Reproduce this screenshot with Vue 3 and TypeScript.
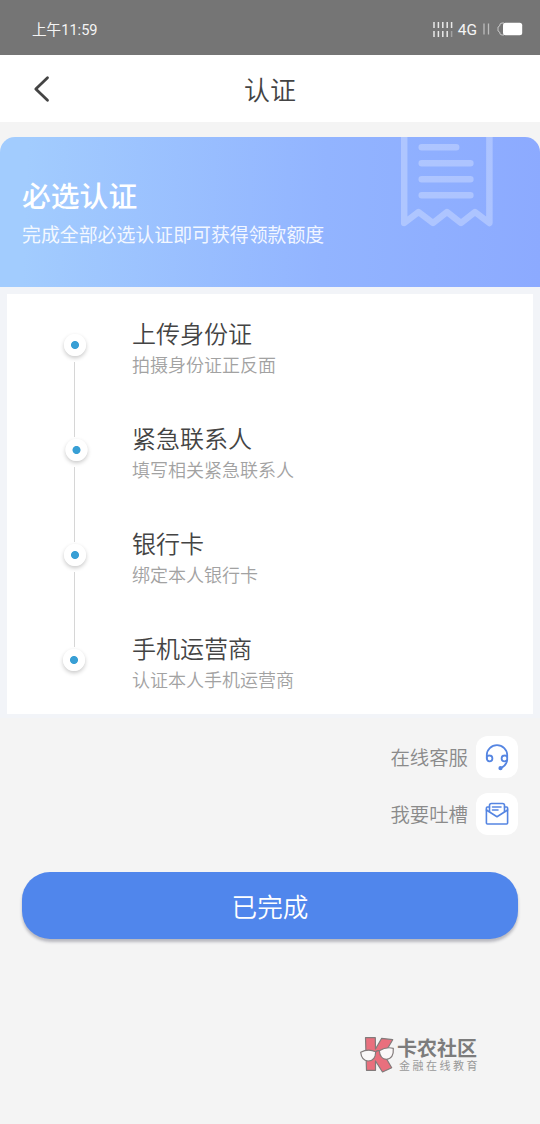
<script setup lang="ts">
interface Step {
  title: string
  hint: string
  shift: number
}

const steps: Step[] = [
  { title: '上传身份证', hint: '拍摄身份证正反面', shift: 0 },
  { title: '紧急联系人', hint: '填写相关紧急联系人', shift: 1.5 },
  { title: '银行卡', hint: '绑定本人银行卡', shift: 0 },
  { title: '手机运营商', hint: '认证本人手机运营商', shift: -1 },
]
</script>

<template>
  <div class="page">
    <div class="status">
      <span class="time">上午11:59</span>
      <div class="indicators">
        <svg class="signal" width="20" height="17" viewBox="0 0 20 17" stroke="#e8e8e8" stroke-width="1.5">
          <path d="M1 1v6M5.4 1v6M9.8 1v6M14.2 1v6M18.6 1v6M1 10v6M5.4 10v6M9.8 10v6M14.2 10v6" />
          <path d="M18.6 10v6" opacity=".4" />
        </svg>
        <span class="net">4G</span>
        <svg class="bars" width="7" height="12" viewBox="0 0 7 12" stroke="#bcbcbc" stroke-width="1.3">
          <path d="M1 .5v11M5.5 .5v11" />
        </svg>
        <svg class="battery" width="26" height="14" viewBox="0 0 26 14">
          <path d="M7 1H5Q2.6 1 2.6 4L1 5v4l1.6 1Q2.6 13 5 13h2" fill="none" stroke="#c8c8c8" />
          <rect x="6" y=".7" width="19.2" height="12.6" rx="2.5" fill="#fff" />
        </svg>
      </div>
    </div>

    <header class="nav">
      <svg class="back" width="18" height="28" viewBox="0 0 18 28">
        <path d="M15.5 2.7L3.8 14l11.700 11.300" fill="none" stroke="#444" stroke-width="2.8" stroke-linecap="round" stroke-linejoin="round" />
      </svg>
      <h1>认证</h1>
    </header>

    <section class="banner">
      <h2>必选认证</h2>
      <p>完成全部必选认证即可获得领款额度</p>
      <svg class="receipt" width="94" height="92" viewBox="0 0 94 92" fill="none" stroke="#fff" stroke-opacity=".28" stroke-width="6.5" stroke-linejoin="round">
        <path d="M4.2 -6V86L18.500 75l14.500 11 14-11 14 11 14-11 14.400 11V-6" />
        <path d="M21.700 10.3h34.5M21.700 26.3h48.700M21.700 42.3h48.700M21.700 58.3h48.700" stroke-linecap="round" />
      </svg>
    </section>

    <section class="card">
      <div v-for="step in steps" :key="step.title" class="step">
        <div class="rail">
          <span class="dot" :style="{ transform: `translateX(${step.shift}px)` }"></span>
          <span class="line"></span>
        </div>
        <div class="copy">
          <h3>{{ step.title }}</h3>
          <p>{{ step.hint }}</p>
        </div>
      </div>
    </section>

    <div class="links">
      <div class="link">
        <span>在线客服</span>
        <div class="tile">
          <svg width="24" height="28" viewBox="0 0 24 28" fill="none" stroke="#5585e2" stroke-width="1.8" stroke-linecap="round">
            <path d="M1.800 15.500V12a10.200 9.800 0 0 1 20.400 0V16.500q-.3 5.500-6.400 8.700" />
            <path d="M1.800 14Q2.500 12.300 4.500 12.500a2.900 2.900 0 0 1 0 5.800Q1.800 18.200 1.800 15M22.200 14Q21.500 12.300 19.500 12.500a2.900 2.900 0 0 0 0 5.800Q21.500 18.200 22.200 17" stroke-linejoin="round" />
            <circle cx="15.500" cy="25.200" r="1.200" fill="#5585e2" />
          </svg>
        </div>
      </div>
      <div class="link">
        <span>我要吐槽</span>
        <div class="tile">
          <svg width="24" height="24" viewBox="0 0 24 24" fill="none" stroke="#5585e2" stroke-width="1.6" stroke-linecap="round" stroke-linejoin="round">
            <path d="M4.500 5H2.400Q1.400 5 1.400 6V21q0 1 1 1H21.600q1 0 1-1V6q0-1-1-1H19.500" />
            <path d="M1.400 8L12 14.700l10.600-6.700" />
            <path d="M4.500 9.500V3.500q0-2 2-2h11q2 0 2 2v6M7.500 5h8.500M7.500 8h5.500" />
          </svg>
        </div>
      </div>
    </div>

    <button class="done">已完成</button>

    <footer class="brand">
      <svg width="35" height="37" viewBox="0 0 35 37" stroke="#827b7b" stroke-width="1.200" stroke-linejoin="round">
        <path d="M5.500 1.700H15.300L15.500 13 21.700 2.300l11 1.400L24 18.500l7.700 13.200-9.200 4.300L15.500 25v9.300H6.500Z" fill="#e96f7d" />
        <path d="M.7 16.300Q8 12.300 15.700 15.700 15.500 25 8 25 1.500 24.500 .7 16.300Z" fill="#faf8f8" />
        <path d="M19.300 14.700Q26 10.500 33.300 12.300 34 22.800 26.500 23.300 20 23 19.300 14.700Z" fill="#faf8f8" />
        <path d="M15.700 15.700q1.600-1.500 3.600-1" fill="none" />
      </svg>
      <div class="brand-copy">
        <strong>卡农社区</strong>
        <span>金融在线教育</span>
      </div>
    </footer>
  </div>
</template>

<style>
body {
  margin: 0;
  background: #f4f4f4;
}
</style>

<style scoped>
.page {
  width: 540px;
  height: 1124px;
  display: flex;
  flex-direction: column;
  overflow: hidden;
  background: #f4f4f4;
  font-family: 'Noto Sans CJK SC', sans-serif;
  font-weight: 350;
}
h1, h2, h3, p {
  margin: 0;
  font-weight: inherit;
}
.status {
  height: 55px;
  flex: none;
  box-sizing: border-box;
  padding: 3px 17px 0 32px;
  display: flex;
  align-items: center;
  justify-content: space-between;
  background: #757575;
  color: #f4f4f4;
}
.time {
  padding-top: 2px;
  font-family: Roboto, 'Noto Sans CJK SC', sans-serif;
  font-size: 14.600px;
  font-weight: 400;
  line-height: 20px;
}
.indicators {
  display: flex;
  align-items: center;
}
.net {
  margin-left: 5px;
  padding-top: 1px;
  font: 400 15.500px/20px Roboto, sans-serif;
}
.bars {
  margin-left: 6px;
}
.battery {
  margin-left: 7px;
}
.nav {
  height: 67px;
  flex: none;
  box-sizing: border-box;
  padding: 0 32px;
  display: grid;
  grid-template-columns: 18px 1fr 18px;
  align-items: center;
  background: #fff;
}
.nav h1 {
  color: #444;
  font-size: 26px;
  line-height: 36px;
  text-align: center;
}
.banner {
  position: relative;
  height: 150px;
  flex: none;
  box-sizing: border-box;
  margin-top: 15px;
  padding: 37px 22px 0;
  border-radius: 15px 15px 0 0;
  overflow: hidden;
  background: linear-gradient(92deg, #a2ccfe 5%, #92b4ff 60%, #8caaff);
  color: #fff;
}
.banner h2 {
  font-size: 28.800px;
  font-weight: 500;
  line-height: 42px;
}
.banner p {
  margin-top: 4px;
  font-size: 18.900px;
  font-weight: 400;
  line-height: 28px;
  opacity: .88;
}
.receipt {
  position: absolute;
  top: 0;
  left: 400px;
}
.card {
  height: 420px;
  flex: none;
  margin: 7px 7px 0;
  background: #fff;
  box-shadow: 0 0 0 7px #f2f4f8;
  clip-path: inset(-7px -7px -4px);
}
.step {
  height: 105px;
  display: flex;
}
.rail {
  width: 22px;
  margin-left: 56.500px;
  padding-top: 40px;
  box-sizing: border-box;
  display: flex;
  flex-direction: column;
  align-items: center;
}
.dot {
  flex: none;
  width: 22px;
  height: 22px;
  border-radius: 50%;
  background: radial-gradient(circle, #389fd5 3.600px, #fff 4.400px);
  box-shadow: 0 2px 4px rgba(0, 0, 0, .22);
}
.line {
  flex: none;
  width: 1px;
  height: 75px;
  margin-top: 6px;
  background: #d6d6d6;
}
.step:last-child .line {
  display: none;
}
.copy {
  margin-left: 46.500px;
  padding-top: 21px;
}
.copy h3 {
  color: #444;
  font-size: 24px;
  line-height: 36px;
}
.copy p {
  color: #a2a2a2;
  font-size: 18px;
  line-height: 26px;
}
.links {
  margin: 22px 22px 0 0;
  display: flex;
  flex-direction: column;
  gap: 15px;
}
.link {
  display: flex;
  justify-content: flex-end;
  align-items: center;
  gap: 8px;
  color: #8a8a8a;
  font-size: 19.400px;
  line-height: 28px;
}
.tile {
  width: 42px;
  height: 42px;
  border-radius: 12px;
  display: flex;
  align-items: center;
  justify-content: center;
  background: #fff;
}
.done {
  height: 67px;
  flex: none;
  margin: 37px 22px 0;
  padding: 0;
  border: 0;
  border-radius: 28px;
  background: #5086ec;
  box-shadow: 0 3px 3px rgba(60, 60, 80, .32);
  color: #fff;
  font-family: inherit;
  font-size: 25.600px;
  font-weight: 350;
}
.brand {
  margin: 97px 0 0 360px;
  display: flex;
  gap: 2px;
}
.brand-copy {
  display: flex;
  flex-direction: column;
  color: #7c7c7c;
  white-space: nowrap;
}
.brand-copy strong {
  font-size: 20px;
  font-weight: 700;
  line-height: 23px;
}
.brand-copy span {
  margin-left: 2px;
  color: #999;
  font-size: 11px;
  font-weight: 400;
  line-height: 12px;
  letter-spacing: 2.500px;
}
</style>
